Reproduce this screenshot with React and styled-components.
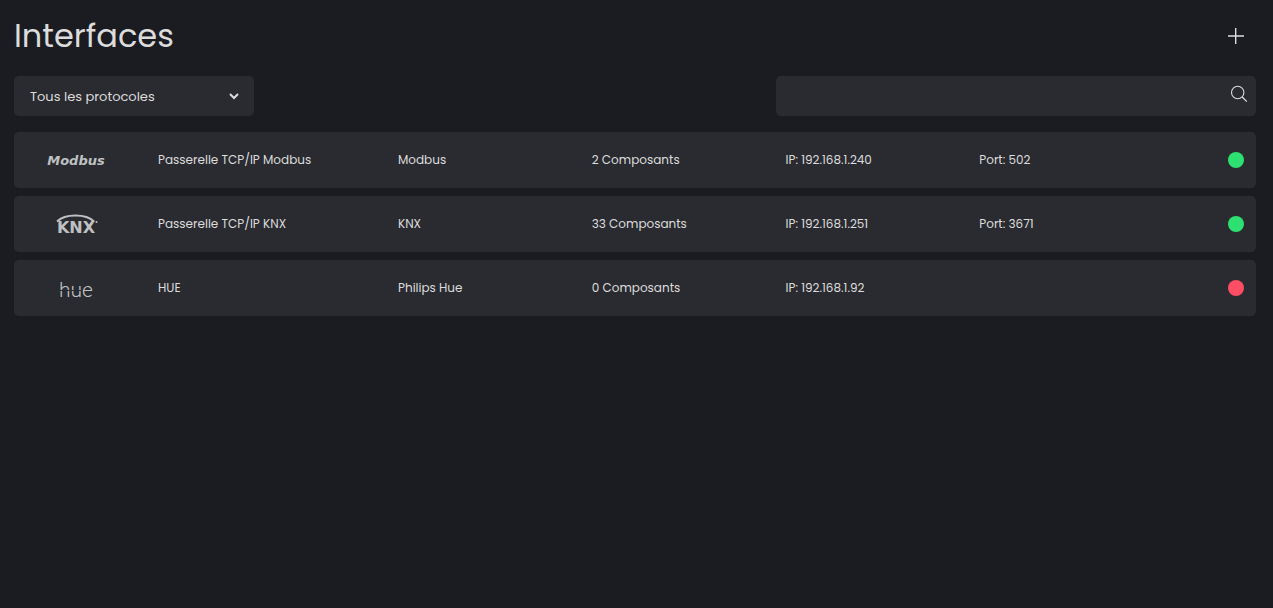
import { useState } from 'react'
import styled, { createGlobalStyle } from 'styled-components'

const interfaces = [
    { name: 'Passerelle TCP/IP Modbus', protocol: 'Modbus', components: 2, ip: '192.168.1.240', port: 502, online: true },
    { name: 'Passerelle TCP/IP KNX', protocol: 'KNX', components: 33, ip: '192.168.1.251', port: 3671, online: true },
    { name: 'HUE', protocol: 'Philips Hue', components: 0, ip: '192.168.1.92', online: false },
]

const protocols = ['Modbus', 'KNX', 'Philips Hue']

function ModbusLogo() {
    return (
        <Logo width="64" height="32" viewBox="0 0 64 32" role="img" aria-label="Modbus">
            <WideText x="32" y="21" textAnchor="middle">Modbus</WideText>
        </Logo>
    )
}

function KnxLogo() {
    return (
        <Logo width="46" height="32" viewBox="0 0 46 32" role="img" aria-label="KNX">
            <path d="M4 13.5 C12 5.5 33 5.5 41 13.5" fill="none" stroke="currentColor" strokeWidth="2" />
            <HeavyText x="23" y="25" textAnchor="middle">KNX</HeavyText>
            <circle cx="43.5" cy="14" r="1" />
        </Logo>
    )
}

function HueLogo() {
    return (
        <Logo width="40" height="32" viewBox="0 0 40 32" role="img" aria-label="hue">
            <ThinText x="20" y="25" textAnchor="middle">hue</ThinText>
            <path d="M3 18.5 H25" stroke="#2a2b30" strokeWidth="1" />
        </Logo>
    )
}

const logos = {
    'Modbus': ModbusLogo,
    'KNX': KnxLogo,
    'Philips Hue': HueLogo,
}

function InterfaceRow({ item }) {
    const ProtocolLogo = logos[item.protocol]

    return (
        <Row>
            <LogoCell><ProtocolLogo /></LogoCell>
            <Cell>{item.name}</Cell>
            <Cell>{item.protocol}</Cell>
            <Cell>{item.components} Composants</Cell>
            <Cell>IP: {item.ip}</Cell>
            <Cell>{item.port ? `Port: ${item.port}` : null}</Cell>
            <StatusCell>
                <Status $online={item.online} role="img" aria-label={item.online ? 'En ligne' : 'Hors ligne'} />
            </StatusCell>
        </Row>
    )
}

function App() {
    const [protocol, setProtocol] = useState('')
    const [search, setSearch] = useState('')

    const visible = interfaces.filter((item) =>
        (!protocol || item.protocol === protocol) &&
        item.name.toLowerCase().includes(search.toLowerCase())
    )

    return (
        <Page>
            <GlobalStyle />
            <Header>
                <Title>Interfaces</Title>
                <AddButton type="button" aria-label="Ajouter une interface">
                    <svg width="16" height="16" viewBox="0 0 16 16" fill="none" stroke="currentColor">
                        <path d="M7.7 0 V16 M0 8 H16" strokeWidth="1.4" />
                    </svg>
                </AddButton>
            </Header>
            <Filters>
                <SelectBox>
                    <Select aria-label="Protocole" value={protocol} onChange={(e) => setProtocol(e.target.value)}>
                        <option value="">Tous les protocoles</option>
                        {protocols.map((p) => <option key={p} value={p}>{p}</option>)}
                    </Select>
                    <Chevron width="10" height="8" viewBox="0 0 10 8" fill="none" stroke="currentColor">
                        <path d="M1 2 L5 6 L9 2" strokeWidth="2" />
                    </Chevron>
                </SelectBox>
                <SearchBox>
                    <SearchInput type="text" aria-label="Rechercher" value={search} onChange={(e) => setSearch(e.target.value)} />
                    <svg width="18" height="18" viewBox="0 0 18 18" fill="none" stroke="currentColor">
                        <circle cx="7.7" cy="7.5" r="6.2" strokeWidth="1.1" />
                        <path d="M12.2 12 L16.8 16.6" strokeWidth="1.3" />
                    </svg>
                </SearchBox>
            </Filters>
            <Table aria-label="Interfaces">
                <colgroup>
                    <Column $width="144px" />
                    <Column $width="240px" />
                    <Column />
                    <Column />
                    <Column />
                    <Column />
                    <Column $width="83px" />
                </colgroup>
                <tbody>
                    {visible.map((item) => <InterfaceRow key={item.name} item={item} />)}
                </tbody>
            </Table>
        </Page>
    )
}

export default App;

const GlobalStyle = createGlobalStyle`
    * {
        box-sizing: border-box;
    }

    body {
        margin: 0;
        background: #1b1c21;
        color: #dcdcdc;
        font-family: Poppins, Inter, "Liberation Sans", sans-serif;
        font-size: 12px;
    }
`

const Page = styled.main`
    min-height: 100vh;
    padding: 12px 17px 12px 14px;
`

const Header = styled.header`
    display: flex;
    align-items: center;
    justify-content: space-between;
    height: 48px;
    padding-right: 12px;
`

const Title = styled.h1`
    margin: 0;
    font-size: 32px;
    font-weight: 400;
    line-height: 48px;
`

const AddButton = styled.button`
    display: flex;
    padding: 0;
    border: 0;
    background: none;
    color: inherit;
    cursor: pointer;
`

const Filters = styled.div`
    display: flex;
    justify-content: space-between;
    gap: 16px;
    margin: 16px 0 8px;
`

const SelectBox = styled.div`
    display: grid;
    align-items: center;
    width: 240px;
    height: 40px;
    border-radius: 5px;
    background: #2a2b30;
`

const Select = styled.select`
    grid-area: 1 / 1;
    width: 100%;
    height: 40px;
    padding: 0 36px 0 16px;
    border: 0;
    border-radius: 5px;
    appearance: none;
    background: transparent;
    color: inherit;
    font-family: inherit;
    font-size: 13px;
    cursor: pointer;
`

const Chevron = styled.svg`
    grid-area: 1 / 1;
    justify-self: end;
    margin-right: 15px;
    pointer-events: none;
`

const SearchBox = styled.label`
    display: flex;
    width: 480px;
    height: 40px;
    padding: 9px 8px 0 16px;
    border-radius: 5px;
    background: #2a2b30;
`

const SearchInput = styled.input`
    flex: 1;
    min-width: 0;
    height: 24px;
    padding: 0;
    border: 0;
    outline: 0;
    background: transparent;
    color: inherit;
    font-family: inherit;
    font-size: 13px;
`

const Table = styled.table`
    width: 100%;
    table-layout: fixed;
    border-collapse: separate;
    border-spacing: 0 8px;
`

const Column = styled.col`
    width: ${({ $width }) => $width || 'auto'};
`

const Row = styled.tr`
    height: 56px;
`

const Cell = styled.td`
    padding: 0;
    background: #2a2b30;
    line-height: 18px;
    white-space: nowrap;
`

const LogoCell = styled(Cell)`
    padding-right: 20px;
    border-radius: 5px 0 0 5px;
    text-align: center;
`

const StatusCell = styled(Cell)`
    padding-right: 12px;
    border-radius: 0 5px 5px 0;
`

const Status = styled.span`
    display: block;
    width: 16px;
    height: 16px;
    margin-left: auto;
    border-radius: 50%;
    background: ${({ $online }) => ($online ? '#2ee072' : '#ff4d63')};
`

const Logo = styled.svg`
    display: block;
    margin: 0 auto;
    color: #bfc0c2;
    fill: currentColor;
`

const WideText = styled.text`
    font: italic bold 13px "DejaVu Sans", sans-serif;
`

const HeavyText = styled.text`
    font: bold 16px "DejaVu Sans", sans-serif;
`

const ThinText = styled.text`
    font: 300 21px Roboto, sans-serif;
`
